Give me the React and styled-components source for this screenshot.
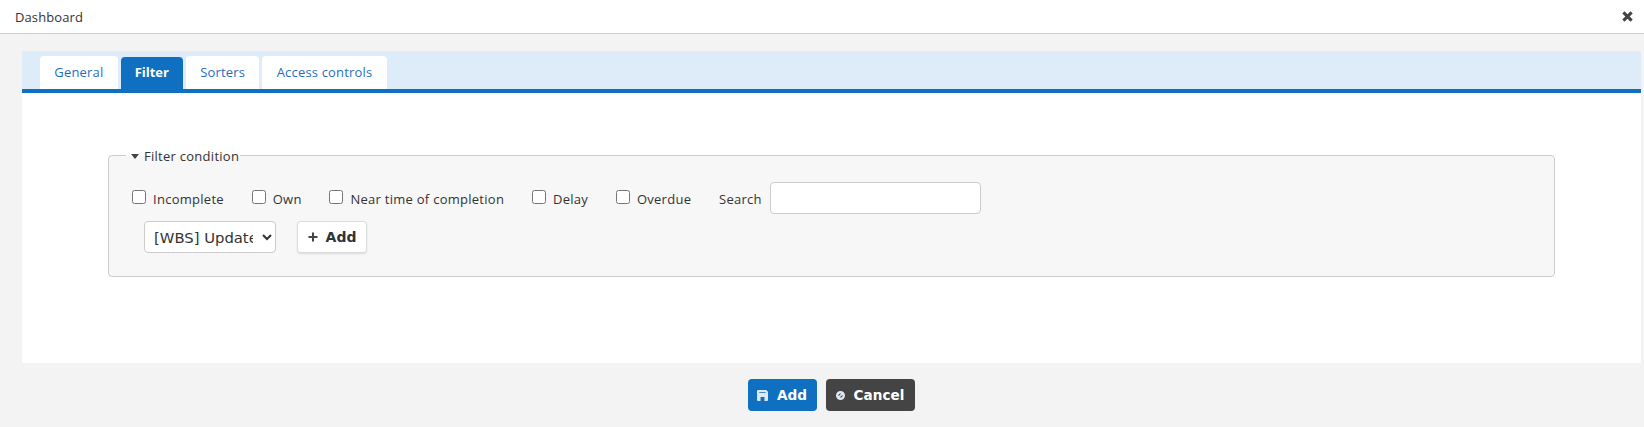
import React from 'react'
import styled, { createGlobalStyle } from 'styled-components'

const tabs = ['General', 'Filter', 'Sorters', 'Access controls']
const checks = ['Incomplete', 'Own', 'Near time of completion', 'Delay', 'Overdue']

const Global = createGlobalStyle`
  html, body { margin: 0; padding: 0; background: #f3f3f3; }
  body { font-family: "Open Sans", "Noto Sans", sans-serif; font-size: 13px; color: #333; }
`

const App = () => (
  <Page>
    <Global />
    <TitleBar>
      <Title>Dashboard</Title>
      <CloseIcon viewBox="0 0 12 12">
        <path d="M1.2 3.2 3.2 1.2 6 4l2.8-2.8 2 2L8 6l2.8 2.8-2 2L6 8l-2.8 2.8-2-2L4 6z" />
      </CloseIcon>
    </TitleBar>
    <Panel>
      <TabBar>
        {tabs.map(t => (
          <Tab key={t} $active={t === 'Filter'}>{t}</Tab>
        ))}
      </TabBar>
      <TabBody>
        <Fieldset>
          <Legend>
            <Caret />
            Filter condition
          </Legend>
          <FilterRow>
            {checks.map(c => (
              <CheckLabel key={c}>
                <Check type="checkbox" />
                {c}
              </CheckLabel>
            ))}
            <SearchLabel>Search</SearchLabel>
            <SearchInput type="text" />
          </FilterRow>
          <AddRow>
            <Select defaultValue="wbs">
              <option value="wbs">[WBS] Updated date</option>
            </Select>
            <LightButton type="button">
              <PlusIcon viewBox="0 0 10 10">
                <path d="M4 0.5h2V4h3.5v2H6v3.5H4V6H0.5V4H4z" />
              </PlusIcon>
              Add
            </LightButton>
          </AddRow>
        </Fieldset>
      </TabBody>
    </Panel>
    <Footer>
      <ActionButton type="button" $bg="#0f6fc0" $width={69}>
        <ActionIcon viewBox="0 0 10 10" $size={11}>
          <path fillRule="evenodd" d="M1 0h7.3L10 1.7V9a1 1 0 0 1-1 1H1a1 1 0 0 1-1-1V1a1 1 0 0 1 1-1zM2 2v.8h5.8V2zM3.2 6.4V10h3.6V6.4z" />
        </ActionIcon>
        Add
      </ActionButton>
      <ActionButton type="button" $bg="#444444" $width={89}>
        <ActionIcon viewBox="0 0 12 12" $size={9}>
          <path fillRule="evenodd" d="M6 0a6 6 0 1 1 0 12A6 6 0 0 1 6 0zM3.4 7l3.6-3.6A2.8 2.8 0 0 0 3.4 7zM5 8.6a2.8 2.8 0 0 0 3.6-3.6z" />
        </ActionIcon>
        Cancel
      </ActionButton>
    </Footer>
  </Page>
)

export default App

const Page = styled.div`
  width: 1644px;
  height: 427px;
  overflow: hidden;
  display: flex;
  flex-direction: column;
  background: #f3f3f3;
`
const TitleBar = styled.header`
  height: 33px;
  flex: none;
  display: flex;
  align-items: center;
  justify-content: space-between;
  padding: 0 10px 0 15px;
  background: #fff;
  border-bottom: 1px solid #ccc;
`
const Title = styled.span`
  font-size: 13px;
  letter-spacing: 0.1px;
  color: #333;
`
const CloseIcon = styled.svg`
  width: 13px;
  height: 13px;
  fill: #444;
`
const Panel = styled.main`
  margin: 17px 3px 0 22px;
  height: 312px;
  flex: none;
  display: flex;
  flex-direction: column;
  background: #fff;
`
const TabBar = styled.nav`
  height: 38px;
  flex: none;
  display: flex;
  align-items: flex-end;
  gap: 3px;
  padding-left: 18px;
  background: #deebf8;
  border-bottom: 4px solid #0f6fc0;
`
const Tab = styled.a`
  display: flex;
  align-items: center;
  justify-content: center;
  padding: 0 ${p => (p.$active ? 14 : 14.3)}px 2px;
  box-sizing: border-box;
  height: ${p => (p.$active ? 32 : 33)}px;
  border-radius: 4px 4px 0 0;
  font-size: 13px;
  letter-spacing: ${p => (p.$active ? 0 : 0.17)}px;
  font-weight: ${p => (p.$active ? 700 : 400)};
  color: ${p => (p.$active ? '#fff' : '#1f6fbf')};
  background: ${p => (p.$active ? '#0f6fc0' : '#fff')};
`
const TabBody = styled.div`
  padding: 62px 86px 0;
`
const Fieldset = styled.section`
  position: relative;
  box-sizing: border-box;
  height: 122px;
  padding: 26px 18px 0 23px;
  background: #f7f7f7;
  border: 1px solid #ccc;
  border-radius: 4px;
`
const Legend = styled.div`
  position: absolute;
  top: -9px;
  left: 17px;
  display: flex;
  align-items: center;
  gap: 5px;
  padding: 0 1px 0 5px;
  line-height: 18px;
  font-size: 13px;
  letter-spacing: 0.27px;
  color: #333;
  background: linear-gradient(to bottom, #fff 50%, #f7f7f7 50%);
`
const Caret = styled.i`
  width: 0;
  height: 0;
  border-left: 4.5px solid transparent;
  border-right: 4.5px solid transparent;
  border-top: 5px solid #444;
`
const FilterRow = styled.div`
  display: flex;
  align-items: center;
  height: 32px;
`
const CheckLabel = styled.label`
  display: flex;
  align-items: center;
  gap: 7px;
  margin-right: 27.8px;
  padding-top: 2px;
  font-size: 13px;
  letter-spacing: 0.27px;
  color: #333;
`
const Check = styled.input`
  width: 14px;
  height: 14px;
  margin: 0 0 4px;
`
const SearchLabel = styled.span`
  margin-right: 8px;
  padding-top: 2px;
  font-size: 13px;
  letter-spacing: 0.27px;
  color: #333;
`
const SearchInput = styled.input`
  box-sizing: border-box;
  width: 211px;
  height: 32px;
  background: #fff;
  border: 1px solid #ccc;
  border-radius: 4px;
  outline: none;
`
const AddRow = styled.div`
  display: flex;
  align-items: center;
  gap: 21px;
  margin: 7px 0 0 12px;
`
const Select = styled.select`
  box-sizing: border-box;
  width: 132px;
  height: 32px;
  padding: 0 6px 0 5px;
  font-family: "DejaVu Sans", sans-serif;
  font-size: 14.8px;
  color: #333;
  background: #fff;
  border: 1px solid #ccc;
  border-radius: 4px;
`
const LightButton = styled.button`
  box-sizing: border-box;
  width: 70px;
  height: 32px;
  display: flex;
  align-items: center;
  justify-content: center;
  gap: 8px;
  padding: 0;
  font-family: "DejaVu Sans", sans-serif;
  font-size: 14px;
  font-weight: 700;
  color: #333;
  background: #fff;
  border: 1px solid #ddd;
  border-radius: 4px;
  box-shadow: 0 1px 2px rgba(0, 0, 0, 0.12);
`
const PlusIcon = styled.svg`
  width: 10px;
  height: 10px;
  fill: #444;
`
const Footer = styled.footer`
  display: flex;
  justify-content: center;
  gap: 9px;
  margin: 16px 0 0 18px;
`
const ActionButton = styled.button`
  box-sizing: border-box;
  width: ${p => p.$width}px;
  height: 32px;
  display: flex;
  align-items: center;
  justify-content: center;
  gap: 9px;
  padding: 0;
  font-family: "DejaVu Sans", sans-serif;
  font-size: 13.6px;
  font-weight: 700;
  color: #fff;
  background: ${p => p.$bg};
  border: none;
  border-radius: 4px;
`
const ActionIcon = styled.svg`
  width: ${p => p.$size}px;
  height: ${p => p.$size}px;
  flex: none;
  fill: #dfe8f2;
`
